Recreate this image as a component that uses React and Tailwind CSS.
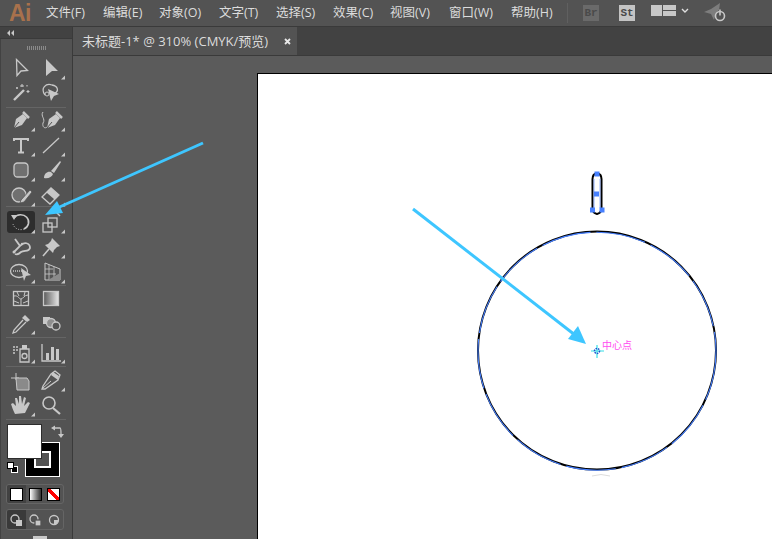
import React from 'react';

const MENU = [
    ['文件(F)', 'w-[57px]'],
    ['编辑(E)', 'w-[56px]'],
    ['对象(O)', 'w-[60px]'],
    ['文字(T)', 'w-[57px]'],
    ['选择(S)', 'w-[57px]'],
    ['效果(C)', 'w-[57px]'],
    ['视图(V)', 'w-[59px]'],
    ['窗口(W)', 'w-[62px]'],
    ['帮助(H)', 'w-[56px]'],
];
const uiFont = 'font-["Open_Sans","Noto_Sans_CJK_SC",sans-serif]';
const Flag = () => <path d="M29 19.5V23.5H25Z" fill="#c8c8c8" stroke="none" />;

// each tool icon is drawn in its 30x25 cell
const Tool = ({ children, flag, active }) => (
    <div className="relative w-[30px] h-[25px] shrink-0">
        {active && <div className="absolute left-[1px] top-[1px] w-[28px] h-[22px] bg-[#2d2d2d] rounded-[3px]"></div>}
        <svg width="30" height="25" viewBox="0 0 30 25" fill="none" stroke="#c8c8c8" strokeWidth="1.3" className="relative">
            {children}
            {flag && <Flag />}
        </svg>
    </div>
);

const Row = ({ children }) => <div className="flex shrink-0">{children}</div>;
const Sep = ({ className }) => <div className={`h-px shrink-0 bg-[#656565] w-[60px] ${className}`}></div>;

const PenNib = () => (
    <>
        <path d="M8 20 L10 11 L17 6 L21 10 L16 17 Z" fill="#c8c8c8" stroke="none" />
        <path d="M17 4 L23 10" stroke="#c8c8c8" strokeWidth="2.5" />
        <path d="M8 20 L13 14" stroke="#535353" strokeWidth="1" />
    </>
);

const Toolbar = () => (
    <div className="w-[73px] shrink-0 flex bg-[#424242]">
        <div className="w-[72px] flex flex-col">
            <div className="h-[12px] shrink-0 bg-[#424242] flex items-center pl-[7px] border-b border-[#3a3a3a]">
                <svg width="7" height="6" viewBox="0 0 7 6" fill="#c8c8c8">
                    <path d="M3 0V6L0 3Z M7 0V6L4 3Z" />
                </svg>
            </div>
            <div className="flex-1 bg-[#535353] ml-[1px] pl-[5px] flex flex-col overflow-hidden">
                <div className="h-[17px] flex items-center justify-center pr-[6px] shrink-0">
                    <div className="w-[19px] h-[4px] bg-[repeating-linear-gradient(90deg,#8a8a8a_0,#8a8a8a_1px,#535353_1px,#535353_2px)]"></div>
                </div>
                <Row>
                    <Tool><path d="M10.5 3.5 L21.5 14.5 L15 15 L11 19.5 Z" /></Tool>
                    <Tool><path d="M10 3 L22 15 H16 L10 20 Z" fill="#c8c8c8" stroke="none" /><path d="M29 19.5V23.5H25Z" fill="#c8c8c8" stroke="none" /></Tool>
                </Row>
                <Row>
                    <Tool>
                        <path d="M8 19 L18 9" strokeWidth="2.4" />
                        <path d="M16 3v3M18 5h-4M22 9v3M23.5 10.5h-3M11 6v2M12 7h-2M21 4v1.5" strokeWidth="1.1" />
                    </Tool>
                    <Tool>
                        <path d="M9 14 C4 7 10 2 16 4 C22 5 23 10 19 12" />
                        <path d="M12 8 L23 13 L18 15 L15 20 Z" fill="#c8c8c8" stroke="none" />
                        <circle cx="11" cy="13" r="2" strokeWidth="1" />
                    </Tool>
                </Row>
                <Sep className="mt-[1px]" />
                <Row>
                    <Tool flag><PenNib /></Tool>
                    <Tool flag>
                        <g transform="translate(3 0)"><PenNib /></g>
                        <path d="M7 4 C4 8 10 11 7 15 C6 19 9 21 11 19" strokeWidth="1" />
                    </Tool>
                </Row>
                <Row>
                    <Tool flag>
                        <path d="M8 5 V8 M8 6 H22 M22 5 V8 M15 6 V19 M12 19.5 H18" strokeWidth="2" />
                    </Tool>
                    <Tool flag><path d="M7 20 L23 5" /></Tool>
                </Row>
                <Row>
                    <Tool flag><rect x="8" y="5" width="14" height="14" rx="3.5" fill="#707070" /></Tool>
                    <Tool flag>
                        <path d="M15 13 L24 3 L25 4 L18 15 Z" fill="#c8c8c8" stroke="none" />
                        <path d="M8 20 C8 15 12 13 15 14 L17 16 C16 19 12 21 8 20 Z" fill="#c8c8c8" stroke="none" />
                    </Tool>
                </Row>
                <Row>
                    <Tool flag>
                        <circle cx="13" cy="12" r="7" fill="#707070" />
                        <path d="M15 17 L24 7 L26 9 L18 19 L14 20 Z" fill="#c8c8c8" stroke="#535353" strokeWidth="0.8" />
                    </Tool>
                    <Tool flag>
                        <path d="M6 14 L15 5 L23 12 L14 21 Z" fill="#535353" />
                        <path d="M10.5 9.5 L15 5 L23 12 L18.5 16.5 Z" fill="#c8c8c8" stroke="none" />
                    </Tool>
                </Row>
                <Sep className="-mt-[2px] mb-[3px]" />
                <Row>
                    <Tool flag active>
                        <path d="M8 8 A8 7.5 0 1 1 18 19" strokeWidth="1.6" />
                        <path d="M18 19 A8 7.5 0 0 1 7 14" stroke="#c8c8c8" strokeWidth="1" strokeDasharray="1 1.5" />
                        <path d="M5 5 H11 L8 10 Z" fill="#c8c8c8" stroke="none" />
                    </Tool>
                    <Tool flag>
                        <rect x="7" y="13" width="9" height="9" />
                        <rect x="12" y="8" width="9" height="9" />
                        <path d="M20 2 L24 6" strokeWidth="1.5" />
                    </Tool>
                </Row>
                <Row>
                    <Tool flag>
                        <path d="M9 4 L14 11 L8 17 M14 11 C18 6 24 8 24 13 C23 17 18 15 15 17 C13 19 11 20 9 19" strokeWidth="1.8" />
                        <circle cx="8" cy="17" r="1.5" fill="#c8c8c8" stroke="none" />
                        <circle cx="16" cy="9" r="1.2" fill="#c8c8c8" stroke="none" />
                    </Tool>
                    <Tool flag>
                        <path d="M16 3 L24 11 L21 12 L18 15 L17 18 L9 10 L12 9 L15 6 Z" fill="#c8c8c8" stroke="none" />
                        <path d="M13 14 L7 21" strokeWidth="1.6" />
                    </Tool>
                </Row>
                <Row>
                    <Tool flag>
                        <ellipse cx="13" cy="11" rx="8.5" ry="6.5" />
                        <path d="M7 11h10" strokeDasharray="1 1" />
                        <path d="M15 8 L25 15 L20 16 L18 21 Z" fill="#c8c8c8" stroke="none" />
                    </Tool>
                    <Tool flag>
                        <path d="M9 3 L24 9 V20 H9 Z" strokeWidth="1" />
                        <path d="M9 9 L17 9 M9 14 L20 14 M13 5 V20 M18 7 V20" strokeWidth="0.8" />
                        <path d="M12 20 L24 13 V20 Z" fill="#8a8a8a" stroke="none" />
                    </Tool>
                </Row>
                <Sep className="" />
                <Row>
                    <Tool>
                        <rect x="7.5" y="5.5" width="15" height="14" />
                        <path d="M8 10 C12 9 13 13 15 13 C17 13 18 9 22 9 M15 13 V19 M11 6 L13 10 M19 6 L18 10 M8 15 L13 17 M22 15 L17 17" strokeWidth="1" />
                    </Tool>
                    <Tool>
                        <defs>
                            <linearGradient id="grad" x1="0" x2="1" y1="0" y2="0">
                                <stop offset="0" stopColor="#5a5a5a" />
                                <stop offset="1" stopColor="#e6e6e6" />
                            </linearGradient>
                        </defs>
                        <rect x="7.5" y="5.5" width="15" height="14" fill="url(#grad)" />
                    </Tool>
                </Row>
                <Row>
                    <Tool flag>
                        <path d="M19 4 L24 9 L21 11 L16 7 Z" fill="#c8c8c8" stroke="none" />
                        <path d="M17 9 L8 19 L7 22 L10 21 L20 11" />
                    </Tool>
                    <Tool>
                        <rect x="7" y="6" width="7" height="7" fill="#c8c8c8" stroke="none" />
                        <circle cx="15" cy="12" r="4.5" fill="#8e8e8e" stroke="#c8c8c8" />
                        <circle cx="20" cy="15" r="4" fill="#535353" />
                    </Tool>
                </Row>
                <Sep className="mt-[1px] mb-[2px]" />
                <Row>
                    <Tool flag>
                        <path d="M7 7h2M10 7h2M7 10h2M10 10h2M7 13h2" strokeWidth="1.6" />
                        <path d="M14 9 H23 V22 H14 Z" />
                        <rect x="16" y="5" width="5" height="4" fill="#c8c8c8" stroke="none" />
                        <circle cx="18.5" cy="16" r="2.5" />
                    </Tool>
                    <Tool flag>
                        <path d="M6 4 V21 H25" />
                        <rect x="10" y="13" width="3" height="7" fill="#c8c8c8" stroke="none" />
                        <rect x="15" y="7" width="3" height="13" fill="#c8c8c8" stroke="none" />
                        <rect x="20" y="9" width="3" height="11" fill="#c8c8c8" stroke="none" />
                    </Tool>
                </Row>
                <Sep className="mt-[1px] mb-[1px]" />
                <Row>
                    <Tool>
                        <path d="M5 10 H13 M10 5 V12" strokeWidth="1" />
                        <path d="M10 10 H21 L23 13 V22 H11 Z" fill="#8a8a8a" stroke="#c8c8c8" strokeWidth="1" />
                    </Tool>
                    <Tool flag>
                        <path d="M19 3 L24 7 L22 12 L9 21 L6 21 L7 18 L15 6 Z" />
                        <path d="M17 4 L23 8 L22 12 L15 7 Z" fill="#c8c8c8" stroke="none" />
                        <path d="M7 20 L15 13" strokeWidth="1" />
                    </Tool>
                </Row>
                <Row>
                    <Tool flag>
                        <path d="M9 21 C7 17 6 14 5 11 L7 10 L10 13 L9 5 L11 5 L13 11 L13 3 L15 3 L16 11 L18 4 L20 5 L18 13 L22 9 L24 10 L19 20 Z" fill="#c8c8c8" stroke="none" />
                    </Tool>
                    <Tool>
                        <circle cx="13" cy="10" r="6" strokeWidth="1.6" />
                        <path d="M17 15 L24 21" strokeWidth="2.2" />
                    </Tool>
                </Row>
                <Sep className="mt-[1px]" />
                <Swatches />
            </div>
        </div>
        <div className="w-px bg-[#3a3a3a]"></div>
    </div>
);

const Swatches = () => (
    <div className="relative flex flex-col shrink-0">
        <div className="relative h-[59px] shrink-0">
            <div className="absolute left-[19px] top-[22px] w-[35px] h-[35px] bg-black border border-white flex items-center justify-center">
                <div className="w-[17px] h-[17px] border-[2px] border-white bg-[#535353]"></div>
            </div>
            <div className="absolute left-[1px] top-[4px] w-[35px] h-[35px] bg-white border border-[#2d2d2d]"></div>
            <svg className="absolute left-[44px] top-[5px]" width="14" height="14" viewBox="0 0 14 14" fill="none" stroke="#c8c8c8" strokeWidth="1.3">
                <path d="M4 3 H10 C11 3 11 5 11 9" />
                <path d="M1 3 L5 0.5 V5.5 Z M8 9 H14 L11 13 Z" fill="#c8c8c8" stroke="none" />
            </svg>
            <div className="absolute left-[1px] top-[42px] w-[11px] h-[11px]">
                <div className="absolute left-[4px] top-[4px] w-[7px] h-[7px] bg-black border border-white"></div>
                <div className="absolute left-0 top-0 w-[7px] h-[7px] bg-white border border-black"></div>
            </div>
        </div>
        <div className="mt-[5px] h-[20px] w-[58px] flex border border-[#656565] rounded-[3px] overflow-hidden shrink-0">
            <div className="flex-1 bg-[#424242] flex items-center justify-center">
                <div className="w-[13px] h-[13px] bg-white border border-black"></div>
            </div>
            <div className="flex-1 flex items-center justify-center">
                <div className="w-[13px] h-[13px] border border-black bg-gradient-to-r from-white to-[#333333]"></div>
            </div>
            <div className="flex-1 flex items-center justify-center">
                <div className="w-[13px] h-[13px] border border-black bg-[linear-gradient(135deg,white_38%,#ff0000_38%,#ff0000_62%,white_62%)] -scale-x-100"></div>
            </div>
        </div>
        <div className="mt-[5px] h-[21px] w-[58px] flex border border-[#656565] rounded-[3px] overflow-hidden shrink-0">
            <div className="flex-1 bg-[#3a3a3a] flex items-center justify-center">
                <svg width="14" height="14" viewBox="0 0 14 14" fill="none" stroke="#c8c8c8" strokeWidth="1.3">
                    <circle cx="6" cy="6" r="4" />
                    <rect x="7" y="7" width="6" height="6" fill="#c8c8c8" stroke="none" />
                </svg>
            </div>
            <div className="flex-1 flex items-center justify-center">
                <svg width="14" height="14" viewBox="0 0 14 14" fill="none" stroke="#c8c8c8" strokeWidth="1.3">
                    <circle cx="6" cy="6" r="4" />
                    <rect x="7" y="7" width="6" height="6" fill="#c8c8c8" stroke="#535353" />
                </svg>
            </div>
            <div className="flex-1 flex items-center justify-center">
                <svg width="14" height="14" viewBox="0 0 14 14" fill="none" stroke="#c8c8c8" strokeWidth="1.3">
                    <circle cx="7" cy="7" r="4.5" />
                    <path d="M7 7 H11.5 A4.5 4.5 0 0 1 7 11.5 Z" fill="#c8c8c8" stroke="none" />
                </svg>
            </div>
        </div>
        <div className="mt-[6px] ml-[27px] w-[14px] h-[4px] bg-[#c8c8c8] shrink-0"></div>
    </div>
);

const MenuBar = () => (
    <div className="h-[27px] shrink-0 bg-[#535353] flex items-center border-b border-[#3a3a3a]">
        <span className="w-[46px] pl-[9px] shrink-0 text-[#a8714c] text-[23px] leading-none font-bold font-['Liberation_Sans',sans-serif] tracking-[-0.5px]">Ai</span>
        <div className={`flex w-[507px] text-[12.5px] text-[#dcdcdc] ${uiFont}`}>
            {MENU.map(([label, w]) => <span key={label} className={`whitespace-nowrap shrink-0 ${w}`}>{label}</span>)}
        </div>
        <div className="w-px h-[20px] bg-[#606060] ml-[14px]"></div>
        <div className="w-[16px] h-[16px] ml-[15px] bg-[#6a6a6a] text-[#4a4a4a] text-[11px] font-bold flex items-center justify-center font-['Liberation_Mono',monospace]">Br</div>
        <div className="w-[16px] h-[16px] ml-[20px] bg-[#c4c4c4] text-[#4a4a4a] text-[11px] font-bold flex items-center justify-center font-['Liberation_Mono',monospace]">St</div>
        <div className="ml-[16px] mb-[5px] flex gap-[1px]">
            <div className="w-[11px] h-[11px] bg-[#c8c8c8]"></div>
            <div className="flex flex-col gap-[1px]">
                <div className="w-[13px] h-[5px] bg-[#c8c8c8]"></div>
                <div className="w-[13px] h-[5px] bg-[#c8c8c8]"></div>
            </div>
        </div>
        <svg className="ml-[5px] mb-[5px]" width="8" height="6" viewBox="0 0 8 6" fill="none" stroke="#e0e0e0" strokeWidth="1.4">
            <path d="M1 1 L4 4 L7 1" />
        </svg>
        <svg className="ml-[15px]" width="24" height="20" viewBox="0 0 24 20" fill="none">
            <path d="M0 9 L7 6 L16 0 L15 7 L12 10 L10 17 L7 11 Z" fill="#7d7d7d" />
            <circle cx="16" cy="13" r="4.5" stroke="#c8c8c8" strokeWidth="1.6" />
            <path d="M16 6.5 V12.5" stroke="#c8c8c8" strokeWidth="1.6" />
        </svg>
    </div>
);

const TabBar = () => (
    <div className="h-[29px] shrink-0 bg-[#424242] border-b border-[#3a3a3a] flex">
        <div className={`w-[224px] bg-[#535353] flex items-center pl-[9px] pt-[1px] text-[13px] text-[#dcdcdc] ${uiFont}`}>
            <span className="whitespace-nowrap">未标题-1* @ 310% (CMYK/预览)</span>
            <svg className="ml-[16px]" width="7" height="7" viewBox="0 0 7 7" stroke="#e8e8e8" strokeWidth="1.8">
                <path d="M1 1 L6 6 M6 1 L1 6" />
            </svg>
        </div>
    </div>
);

const Handle = ({ x, y, s = 5 }) => <rect x={x - s / 2} y={y - s / 2} width={s} height={s} fill="#4780ff" />;

// artwork on the artboard, page coordinates
const Overlay = () => (
    <svg className="absolute left-0 top-0 pointer-events-none" width="772" height="539" viewBox="0 0 772 539" fill="none">
        <circle cx="597" cy="350.6" r="119" stroke="#000" strokeWidth="2" />
        <circle cx="597" cy="351.2" r="119" stroke="#4780ff" strokeWidth="1.1" strokeDasharray="50 6" />
        <path d="M592.5 179 Q592.5 174 597 173 Q601.5 174 601.5 179 V208 Q601.5 213 597 214 Q592.5 213 592.5 208 Z" stroke="#000" strokeWidth="2" />
        <path d="M594 179 V208 M600 179 V208" stroke="#7aa0ff" strokeWidth="0.8" />
        <Handle x={597} y={174} />
        <Handle x={592.5} y={210} />
        <Handle x={602} y={210} />
        <Handle x={596.5} y={194} />
        <path d="M592 476 Q601 473 610 476" stroke="#dddddd" strokeWidth="1" />

        <path d="M591 351 H604 M597 345 V358" stroke="#35e0e6" strokeWidth="1.2" />
        <circle cx="597" cy="351" r="2.5" stroke="#1c4fd0" strokeWidth="1.5" strokeDasharray="1.5 1" />

        <path d="M413 209 L575 335" stroke="#3ec6ff" strokeWidth="3" />
        <path d="M586 344 L578 326 L568 339 Z" fill="#3ec6ff" />
        <path d="M203 143 L55 209" stroke="#3ec6ff" strokeWidth="3" />
        <path d="M45 215 L57 201 L63 213 Z" fill="#3ec6ff" />
    </svg>
);

export default function App() {
    return (
        <div className="relative w-[772px] h-[539px] overflow-hidden flex flex-col bg-[#535353]">
            <MenuBar />
            <div className="flex flex-1 min-h-0">
                <Toolbar />
                <div className="flex-1 flex flex-col min-w-0">
                    <TabBar />
                    <div className="relative flex-1 bg-[#5b5b5b]">
                        <div className="absolute left-[184px] top-[17px] right-0 bottom-0 bg-white border-l border-t border-black"></div>
                    </div>
                </div>
            </div>
            <Overlay />
            <span className={`absolute left-[602px] top-[338px] text-[10px] leading-[14px] text-[#ff4df0] ${uiFont}`}>中心点</span>
        </div>
    );
}
